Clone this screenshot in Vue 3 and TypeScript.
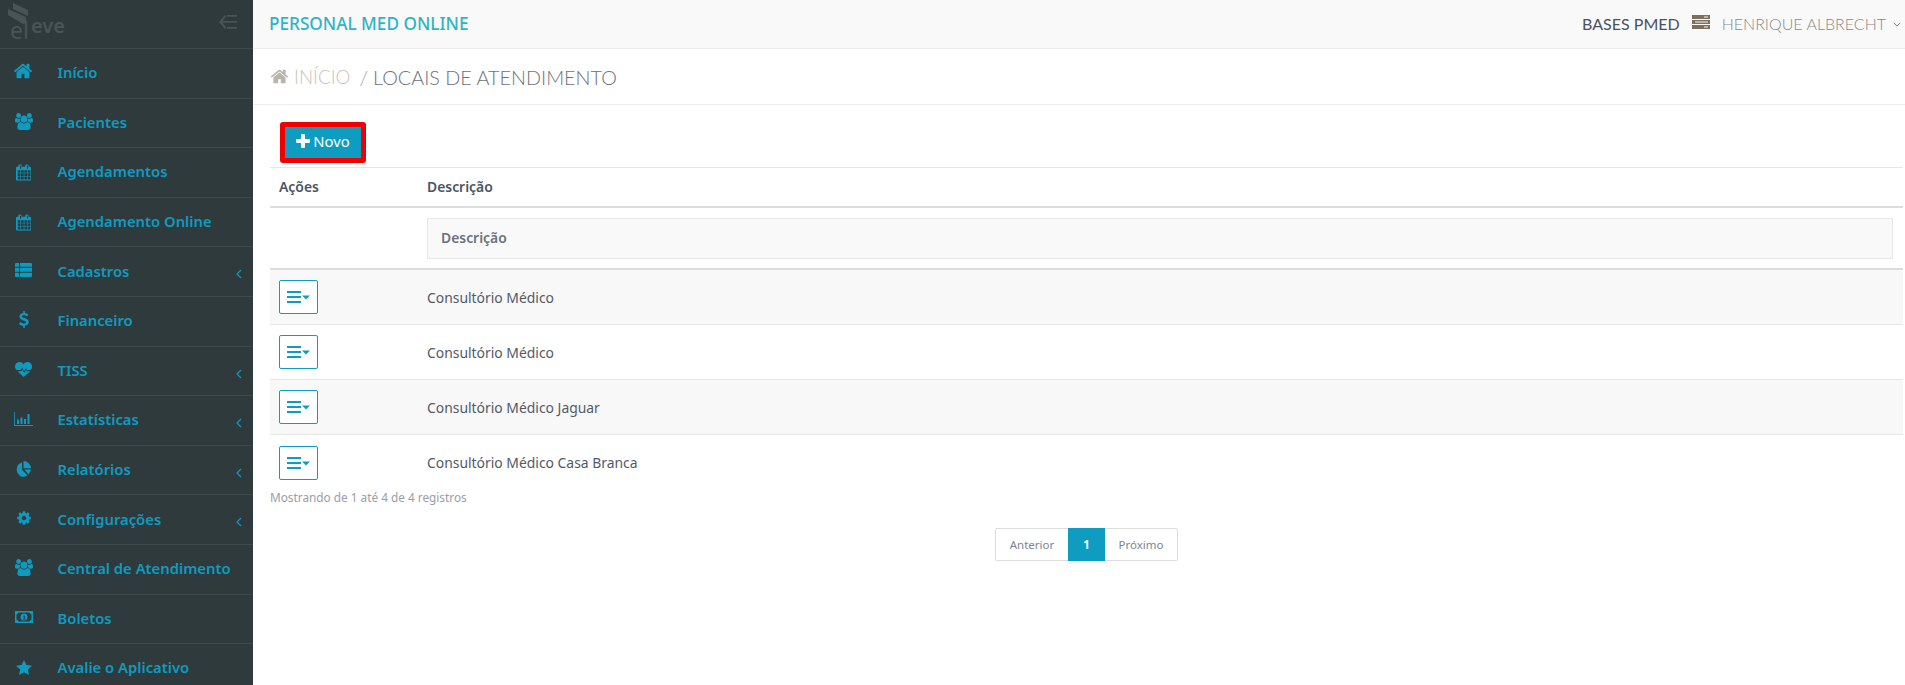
<script setup lang="ts">
interface Icon { box: string; d: string }
const icons: Record<string, Icon> = {
  home: { box: '0 0 1792 1792', d: 'M1472 992v480q0 26-19 45t-45 19h-384v-384H768v384H384q-26 0-45-19t-19-45V992q0-1 .5-3t.5-3l575-474 575 474q1 2 1 6zm223-69l-62 74q-8 9-21 11h-3q-13 0-21-7L896 424l-692 577q-12 8-24 7-13-2-21-11l-62-74q-8-10-7-23.500t11-21.500l719-599q32-26 76-26t76 26l244 204V288q0-14 9-23t23-9h192q14 0 23 9t9 23v408l219 182q10 8 11 21.500t-7 23.500z' },
  users: { box: '0 0 1920 1792', d: 'M593 896q-162 5-265 128H194q-82 0-138-40.500T0 865q0-353 124-353 6 0 43.500 21t97.500 42.500T384 597q67 0 133-23-5 37-5 66 0 139 81 256zm1071 637q0 120-73 189.500t-194 69.500H523q-121 0-194-69.500T256 1533q0-53 3.500-103.500t14-109T300 1212t43-97.500 62-81 85.500-53.500T602 960q10 0 43 21.500t73 48 107 48 135 21.500 135-21.500 107-48 73-48 43-21.500q61 0 111.500 20t85.500 53.500 62 81 43 97.500 26.500 108.500 14 109 3.500 103.500zM640 256q0 106-75 181t-181 75-181-75-75-181 75-181 181-75 181 75 75 181zm704 384q0 159-112.500 271.500T960 1024 688.500 911.500 576 640t112.500-271.500T960 256t271.500 112.500T1344 640zm576 225q0 78-56 118.500t-138 40.500h-134q-103-123-265-128 81-117 81-256 0-29-5-66 66 23 133 23 59 0 119-21.500t97.500-42.500 43.500-21q124 0 124 353zm-128-609q0 106-75 181t-181 75-181-75-75-181 75-181 181-75 181 75 75 181z' },
  calendar: { box: '0 0 1664 1792', d: 'M192 1664h288v-288H192v288zm352 0h320v-288H544v288zm-352-352h288V992H192v320zm352 0h320V992H544v320zM192 928h288V640H192v288zm736 736h320v-288H928v288zM544 928h320V640H544v288zm768 736h288v-288h-288v288zm-384-352h320V992H928v320zM576 448V160q0-13-9.500-22.500T544 128h-64q-13 0-22.500 9.500T448 160v288q0 13 9.500 22.500T480 480h64q13 0 22.500-9.500T576 448zm736 864h288V992h-288v320zM928 928h320V640H928v288zm384 0h288V640h-288v288zm32-480V160q0-13-9.500-22.500T1312 128h-64q-13 0-22.500 9.500T1216 160v288q0 13 9.500 22.500t22.500 9.500h64q13 0 22.500-9.500t9.500-22.500zm384-64v1280q0 52-38 90t-90 38H128q-52 0-90-38t-38-90V384q0-52 38-90t90-38h128v-96q0-66 47-113T416 0h64q66 0 113 47t47 113v96h384v-96q0-66 47-113t113-47h64q66 0 113 47t47 113v96h128q52 0 90 38t38 90z' },
  list: { box: '0 0 17 14', d: 'M0 1a1 1 0 0 1 1-1h3v3.700H0zM5 0h11a1 1 0 0 1 1 1v2.700H5zM0 4.800h4v3.900H0zM5 4.800h12v3.900H5zM0 9.800h4V14H1a1 1 0 0 1-1-1zM5 9.800h12V13a1 1 0 0 1-1 1H5z' },
  dollar: { box: '0 0 10 17', d: 'M4.200 0h1.600v2.100c1.500.2 2.800.8 3.500 1.400L8.200 5.400C7.300 4.700 6.200 4.200 5 4.200c-1.200 0-1.900.5-1.900 1.200 0 .8.8 1.100 2.500 1.700C8 7.900 9.700 8.900 9.700 11.100c0 1.900-1.400 3.300-3.900 3.700V17H4.200v-2.100c-1.700-.2-3.200-.9-4.200-1.800l1.300-2c1.100.9 2.400 1.500 3.700 1.500 1.300 0 2-.6 2-1.300 0-.9-.9-1.300-2.700-1.900C2 8.600.4 7.600.4 5.600.4 3.800 1.800 2.500 4.200 2.100z' },
  heart: { box: '0 0 17 15', d: 'M8.500 15 2.600 9.300h3.700l1-1.900 1.900 3.600 1.900-3.200.8 1.500h3.500zM1.500 8.100C.5 7.100 0 6 0 4.700 0 2 2 0 4.600 0c1.500 0 2.900.8 3.900 2.200C9.500.8 10.900 0 12.400 0 15 0 17 2 17 4.700c0 1.300-.5 2.400-1.500 3.400h-3.600L10.900 6 9.100 9.200 7.300 5.700 5.500 8.100z' },
  chart: { box: '0 0 19 14', d: 'M0 0h.8v13h18.200v1H0zM3 7.500h2V12H3zM6.500 5.500h2V12h-2zM10 7h2v5h-2zM13.500 2h2v10h-2z' },
  pie: { box: '0 0 16 16', d: 'M7 1.200v7.600l5.400 5.400A7.700 7.700 0 0 1 7.700 16 7.700 7.700 0 0 1 7 1.200zM8.500 0A7.700 7.700 0 0 1 16 7.300H8.500zM9.300 8.600H16a7.700 7.700 0 0 1-2.600 4.700z' },
  cog: { box: '0 0 1792 1792', d: 'M1152 896q0-106-75-181t-181-75-181 75-75 181 75 181 181 75 181-75 75-181zm512-109v222q0 12-8 23t-20 13l-185 28q-19 54-39 91 35 50 107 138 10 12 10 25t-9 23q-27 37-99 108t-94 71q-12 0-26-9l-138-108q-44 23-91 38-16 136-29 186-7 28-36 28H785q-14 0-24.500-8.500T749 1634l-28-184q-49-16-90-37l-141 107q-10 9-25 9-14 0-25-11-126-114-165-168-7-10-7-23 0-12 8-23 15-21 51-66.500t54-70.500q-27-50-41-99l-183-27q-13-2-21-12.500t-8-23.500V783q0-12 8-23t19-13l186-28q14-46 39-92-40-57-107-138-10-12-10-24 0-10 9-23 26-36 98.500-107.500T465 263q13 0 26 10l138 107q44-23 91-38 16-136 29-186 7-28 36-28h222q14 0 24.500 8.500T1043 158l28 184q49 16 90 37l142-107q9-9 24-9 13 0 25 10 129 119 165 170 7 8 7 22 0 12-8 23-15 21-51 66.500t-54 70.500q26 50 41 98l183 28q13 2 21 12.500t8 23.500z' },
  money: { box: '0 0 18 12', d: 'M0 0h18v12H0zM3.500 1.500A2.500 2.500 0 0 1 1.500 3.500v5a2.500 2.500 0 0 1 2 2h11a2.500 2.500 0 0 1 2-2v-5a2.500 2.500 0 0 1-2-2zM9 2.500a3.500 3.500 0 1 1 0 7 3.500 3.500 0 0 1 0-7zM8 4.800v.8h.7v2.200H8v.7h2.700v-.7H9.900V4.500z' },
  star: { box: '0 0 16 15', d: 'M8 0l2.400 5 5.600.7-4.100 3.800 1.100 5.500L8 12.300 3 15l1.100-5.500L0 5.700 5.600 5z' },
}
interface MenuItem { label: string; icon: string; sub?: boolean }
const menu: MenuItem[] = [
  { label: 'Início', icon: 'home' },
  { label: 'Pacientes', icon: 'users' },
  { label: 'Agendamentos', icon: 'calendar' },
  { label: 'Agendamento Online', icon: 'calendar' },
  { label: 'Cadastros', icon: 'list', sub: true },
  { label: 'Financeiro', icon: 'dollar' },
  { label: 'TISS', icon: 'heart', sub: true },
  { label: 'Estatísticas', icon: 'chart', sub: true },
  { label: 'Relatórios', icon: 'pie', sub: true },
  { label: 'Configurações', icon: 'cog', sub: true },
  { label: 'Central de Atendimento', icon: 'users' },
  { label: 'Boletos', icon: 'money' },
  { label: 'Avalie o Aplicativo', icon: 'star' },
]
const rows: string[] = ['Consultório Médico', 'Consultório Médico', 'Consultório Médico Jaguar', 'Consultório Médico Casa Branca']
</script>

<template>
  <div class="app">
    <aside class="sidebar">
      <div class="brand">
        <div class="logo">
          <svg class="logo-mark" viewBox="0 0 21 21"><path d="M5 0 20 7V13L5 6zM0 6 18 14V20L15 21 0 12z" /></svg>
          <span class="logo-big">el</span>
          <span class="logo-small">eve</span>
        </div>
        <svg class="collapse" viewBox="0 0 18 14"><path d="M6 0 7.300 1.200 3.500 6H18v1.800H3.500l3.800 5L6 14 0 7zM8 0h10v1.800H8zM8 12h10v1.800H8z" /></svg>
      </div>
      <nav>
        <a v-for="item in menu" :key="item.label" class="item">
          <span class="item-icon"><svg :class="['ico', 'ico-' + item.icon]" :viewBox="icons[item.icon].box"><path :d="icons[item.icon].d" /></svg></span>
          <span class="item-label">{{ item.label }}</span>
          <svg v-if="item.sub" class="sub" viewBox="0 0 6 10"><path d="M5 1 1 5l4 4" /></svg>
        </a>
      </nav>
    </aside>
    <main class="main">
      <header class="topbar">
        <span class="title">PERSONAL MED ONLINE</span>
        <div class="top-right">
          <span class="bases">BASES PMED</span>
          <svg class="server" viewBox="0 0 18 14"><path d="M0 0h18v4H0zM12 1.500v1h4v-1zM0 5h18v4H0zM3 6.500v1h13v-1zM0 10h18v4H0zM12 11.500v1h4v-1z" fill-rule="evenodd" /></svg>
          <span class="user">HENRIQUE ALBRECHT</span>
          <svg class="chev" viewBox="0 0 10 6"><path d="M1 1l4 4 4-4" /></svg>
        </div>
      </header>
      <div class="crumbs">
        <svg class="crumb-home" :viewBox="icons.home.box"><path :d="icons.home.d" /></svg>
        <span class="crumb-link">INÍCIO</span>
        <span class="crumb-sep">/</span>
        <span class="crumb-current">LOCAIS DE ATENDIMENTO</span>
      </div>
      <section class="content">
        <div class="toolbar">
          <button class="new-btn" type="button">
            <svg class="plus" viewBox="0 0 14 14"><path d="M5 1a1 1 0 0 1 1-1h2a1 1 0 0 1 1 1v4h4a1 1 0 0 1 1 1v2a1 1 0 0 1-1 1H9v4a1 1 0 0 1-1 1H6a1 1 0 0 1-1-1V9H1a1 1 0 0 1-1-1V6a1 1 0 0 1 1-1h4z" /></svg>
            <span>Novo</span>
          </button>
        </div>
        <div class="table">
          <div class="thead">
            <div class="col-a th-a">Ações</div>
            <div class="col-b">Descrição</div>
          </div>
          <div class="tfilter">
            <div class="col-a"></div>
            <div class="col-b"><div class="filter-box">Descrição</div></div>
          </div>
          <div v-for="(row, i) in rows" :key="i" :class="['tr', { odd: i % 2 === 0 }]">
            <div class="col-a cell-a">
              <button class="menu-btn" type="button">
                <svg class="bars" viewBox="0 0 23 12"><path d="M0 0h14v2H0zM0 5h14v2H0zM0 10h14v2H0zM15 4.500h8l-4 4z" /></svg>
              </button>
            </div>
            <div class="col-b">{{ row }}</div>
          </div>
        </div>
        <p class="info">Mostrando de 1 até 4 de 4 registros</p>
        <div class="pager-wrap">
          <div class="pager">
            <span class="page first">Anterior</span>
            <span class="page active">1</span>
            <span class="page last">Próximo</span>
          </div>
        </div>
      </section>
    </main>
  </div>
</template>

<style scoped>
.app {
  display: flex;
  width: 1905px;
  height: 685px;
  overflow: hidden;
  background: #fff;
  font-family: "Noto Sans", "Lato", sans-serif;
  color: #525a68;
}
.sidebar {
  flex: 0 0 253px;
  background: #2f3a3d;
  overflow: hidden;
}
.brand {
  height: 48px;
  position: relative;
  display: flex;
  align-items: center;
  justify-content: space-between;
  padding: 0 16px 0 8px;
  box-sizing: border-box;
}
.logo {
  position: relative;
  width: 60px;
  height: 34px;
}
.logo-mark {
  position: absolute;
  left: 0;
  top: -4px;
  width: 21px;
  height: 21px;
  fill: #495456;
}
.logo-big,
.logo-small {
  position: absolute;
  line-height: 26px;
  color: #495456;
}
.logo-big {
  left: 2px;
  top: 10px;
  font-size: 23px;
  font-weight: 400;
}
.logo-small {
  left: 23px;
  top: 6px;
  font-size: 20px;
  font-weight: 600;
}
.collapse {
  width: 18px;
  height: 14px;
  fill: #495456;
  margin-top: -4px;
}
.item {
  display: flex;
  align-items: center;
  height: 49.6px;
  box-sizing: border-box;
  border-top: 1px solid #3e4a4c;
  color: #0f9ac0;
  font-size: 14.800px;
  font-weight: 600;
  padding-bottom: 2px;
  position: relative;
}
.item-icon {
  width: 57.500px;
  padding-left: 13px;
  box-sizing: border-box;
  display: flex;
  align-items: center;
  justify-content: flex-start;
}
.ico { fill: #0f9ac0; display: block; }
.ico-home { width: 20px; height: 20px; margin-top: -2px; }
.ico-users { width: 18px; height: 17px; margin-left: 2px; margin-top: -1px; }
.ico-calendar { width: 15px; height: 17px; margin-left: 3px; margin-top: 2px; }
.ico-list { width: 17px; height: 14px; margin-left: 2px; margin-top: -2px; }
.ico-dollar { width: 10px; height: 17px; margin-left: 6px; margin-top: -1px; }
.ico-heart { width: 17px; height: 15px; margin-left: 2px; margin-top: -1px; }
.ico-chart { width: 19px; height: 14px; margin-left: 1px; margin-top: 0; }
.ico-pie { width: 16px; height: 16px; margin-left: 2px; margin-top: 0; }
.ico-cog { width: 16px; height: 16px; margin-left: 3px; margin-top: -2px; }
.ico-money { width: 18px; height: 12px; margin-left: 2px; margin-top: -2px; }
.ico-star { width: 16px; height: 15px; margin-left: 3px; margin-top: 1px; }
.sub {
  position: absolute;
  left: 236px;
  top: 22px;
  width: 6px;
  height: 10px;
  fill: none;
  stroke: #0f9ac0;
  stroke-width: 1.200;
}
.main {
  flex: 1;
  min-width: 0;
  display: flex;
  flex-direction: column;
}
.topbar {
  height: 49px;
  box-sizing: border-box;
  flex: none;
  background: #f9f9f9;
  border-bottom: 1px solid #ececec;
  display: flex;
  align-items: center;
  justify-content: space-between;
  padding: 0 4px 2px 16px;
}
.title {
  color: #2db4c8;
  font-size: 17.200px;
  font-weight: 500;
}
.top-right {
  display: flex;
  align-items: center;
}
.bases {
  font-family: "Lato", sans-serif;
  font-size: 16px;
  color: #4a5160;
  margin-right: 1px;
}
.server {
  width: 18px;
  height: 14px;
  fill: #7b705f;
  margin: -2px 12px 0 11px;
}
.user {
  font-family: "Lato", sans-serif;
  font-size: 16px;
  font-weight: 300;
  color: #8a8a8a;
}
.chev {
  width: 8px;
  height: 5px;
  margin: 2px 0 0 7px;
  fill: none;
  stroke: #777;
  stroke-width: 1.200;
}
.crumbs {
  height: 56px;
  box-sizing: border-box;
  border-bottom: 1px solid #eeeeee;
  display: flex;
  align-items: center;
  padding-left: 17px;
  flex: none;
}
.crumb-home {
  width: 19px;
  height: 19px;
  fill: #b9b4ac;
  margin-right: 5px;
}
.crumb-link,
.crumb-sep,
.crumb-current {
  font-family: "Lato", sans-serif;
  font-weight: 300;
  font-size: 19.800px;
}
.crumb-link { color: #c9c3ba; font-size: 18.800px; }
.crumb-sep {
  color: #a8a39b;
  margin: 0 5px 0 9px;
}
.crumb-current { color: #6f7078; }
.content {
  padding: 0 2px 0 17px;
  flex: 1;
}
.toolbar {
  height: 62px;
  box-sizing: border-box;
  padding: 17px 0 0 10px;
}
.new-btn {
  display: flex;
  align-items: center;
  justify-content: center;
  width: 86px;
  height: 41px;
  box-sizing: border-box;
  border: 5px solid #f00000;
  border-radius: 3px;
  background: #0e9dc0;
  color: #fff;
  font-family: inherit;
  font-size: 14.800px;
  padding: 0 0 4px;
}
.plus {
  width: 14px;
  height: 14px;
  fill: #fff;
  margin: 1px 3px 0 0;
}
.table {
  font-size: 13.900px;
  border-top: 1px solid #e6e6e6;
}
.thead {
  display: flex;
  align-items: center;
  height: 38px;
  padding-bottom: 1px;
  box-sizing: border-box;
  height: 40px;
  border-bottom: 2px solid #dddddd;
  font-weight: 600;
  color: #4b5563;
}
.col-a {
  flex: 0 0 157px;
}
.col-b {
  flex: 1;
  min-width: 0;
}
.th-a { padding-left: 9px; box-sizing: border-box; }
.tfilter {
  display: flex;
  align-items: center;
  height: 60px;
  border-bottom: 2px solid #dddddd;
}
.filter-box {
  height: 41px;
  margin-right: 10px;
  box-sizing: border-box;
  background: #f9f9f9;
  border: 1px solid #e8e8e8;
  display: flex;
  align-items: center;
  padding: 0 0 2px 13px;
  font-weight: 600;
  color: #6b7280;
}
.tr {
  display: flex;
  align-items: center;
  height: 55px;
  box-sizing: border-box;
  border-bottom: 1px solid #e6e6e6;
  color: #525a68;
}
.tr:last-child { border-bottom: 0; }
.tr.odd { background: #f8f8f8; }
.cell-a { padding-left: 9px; box-sizing: border-box; }
.menu-btn {
  display: flex;
  align-items: center;
  justify-content: center;
  width: 39px;
  height: 34px;
  box-sizing: border-box;
  padding: 0;
  border: 1px solid #0e9dc0;
  border-radius: 2px;
  background: #fff;
}
.bars {
  width: 23px;
  height: 12px;
  fill: #0e9dc0;
}
.info {
  margin: -2px 0 0;
  font-size: 11.800px;
  line-height: 18px;
  color: #9a9ea6;
}
.pager-wrap {
  display: flex;
  justify-content: center;
  margin: 22px 0 0;
}
.pager {
  display: flex;
  height: 33px;
  font-size: 11.500px;
}
.page {
  display: flex;
  align-items: center;
  justify-content: center;
  box-sizing: border-box;
  color: #7d8490;
  border: 1px solid #dddddd;
}
.first { width: 73px; border-radius: 2px 0 0 2px; border-right: 0; }
.active { width: 37px; background: #0e9dc0; border-color: #0e9dc0; color: #fff; font-weight: 700; }
.last { width: 73px; border-radius: 0 2px 2px 0; border-left: 0; }
</style>

<style>
html, body { margin: 0; background: #fff; }
</style>
